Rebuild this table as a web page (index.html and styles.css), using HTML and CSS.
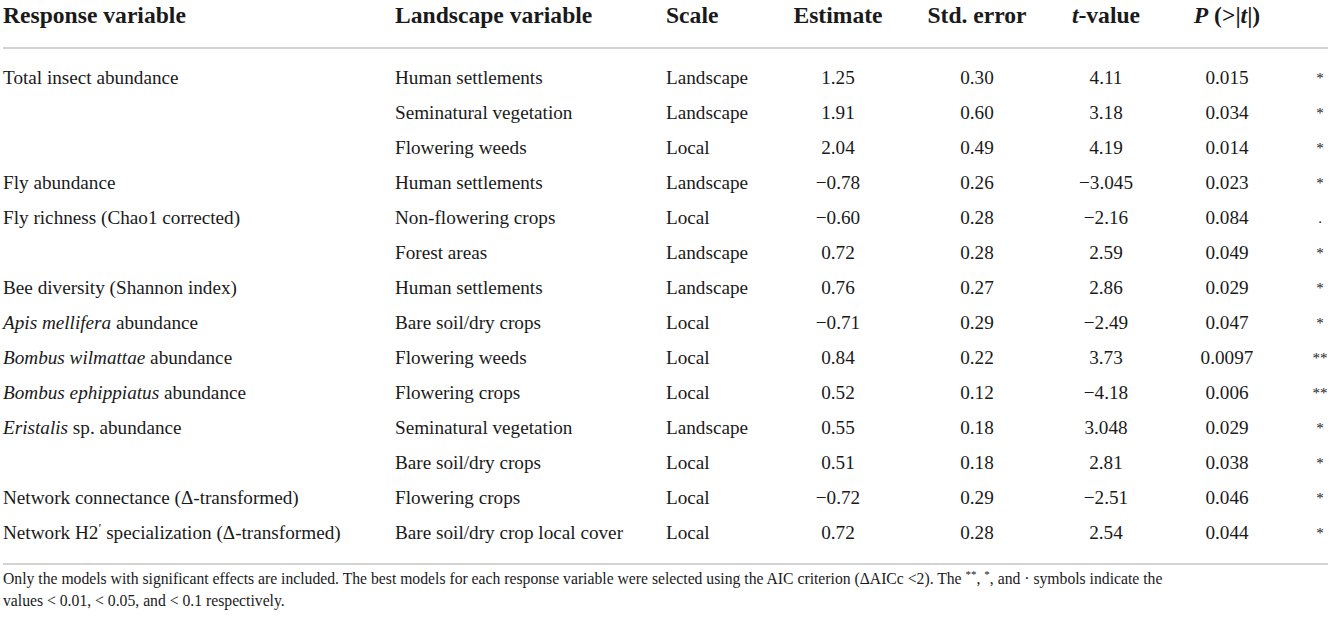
FILE: index.html
```html
<!DOCTYPE html>
<html lang="en">
<head>
<meta charset="utf-8">
<title>Table</title>
<link rel="stylesheet" href="styles.css">
</head>
<body>
<div class="wrap">
<table class="data">
  <colgroup>
    <col class="c-resp"><col class="c-land"><col class="c-scale"><col class="c-est"><col class="c-se"><col class="c-t"><col class="c-p"><col class="c-sig">
  </colgroup>
  <thead>
    <tr>
      <th class="l">Response variable</th>
      <th class="l">Landscape variable</th>
      <th class="l">Scale</th>
      <th>Estimate</th>
      <th>Std. error</th>
      <th><i>t</i>-value</th>
      <th><i>P</i> (&gt;|<i>t</i>|)</th>
      <th class="sig"></th>
    </tr>
  </thead>
  <tbody>
    <tr class="first"><td class="l">Total insect abundance</td><td class="l">Human settlements</td><td class="l">Landscape</td><td>1.25</td><td>0.30</td><td>4.11</td><td>0.015</td><td class="sig">*</td></tr>
    <tr><td class="l"></td><td class="l">Seminatural vegetation</td><td class="l">Landscape</td><td>1.91</td><td>0.60</td><td>3.18</td><td>0.034</td><td class="sig">*</td></tr>
    <tr><td class="l"></td><td class="l">Flowering weeds</td><td class="l">Local</td><td>2.04</td><td>0.49</td><td>4.19</td><td>0.014</td><td class="sig">*</td></tr>
    <tr><td class="l">Fly abundance</td><td class="l">Human settlements</td><td class="l">Landscape</td><td>−0.78</td><td>0.26</td><td>−3.045</td><td>0.023</td><td class="sig">*</td></tr>
    <tr><td class="l">Fly richness (Chao1 corrected)</td><td class="l">Non-flowering crops</td><td class="l">Local</td><td>−0.60</td><td>0.28</td><td>−2.16</td><td>0.084</td><td class="sig">.</td></tr>
    <tr><td class="l"></td><td class="l">Forest areas</td><td class="l">Landscape</td><td>0.72</td><td>0.28</td><td>2.59</td><td>0.049</td><td class="sig">*</td></tr>
    <tr><td class="l">Bee diversity (Shannon index)</td><td class="l">Human settlements</td><td class="l">Landscape</td><td>0.76</td><td>0.27</td><td>2.86</td><td>0.029</td><td class="sig">*</td></tr>
    <tr><td class="l"><i>Apis mellifera</i> abundance</td><td class="l">Bare soil/dry crops</td><td class="l">Local</td><td>−0.71</td><td>0.29</td><td>−2.49</td><td>0.047</td><td class="sig">*</td></tr>
    <tr><td class="l"><i>Bombus wilmattae</i> abundance</td><td class="l">Flowering weeds</td><td class="l">Local</td><td>0.84</td><td>0.22</td><td>3.73</td><td>0.0097</td><td class="sig">**</td></tr>
    <tr><td class="l"><i>Bombus ephippiatus</i> abundance</td><td class="l">Flowering crops</td><td class="l">Local</td><td>0.52</td><td>0.12</td><td>−4.18</td><td>0.006</td><td class="sig">**</td></tr>
    <tr><td class="l"><i>Eristalis</i> sp. abundance</td><td class="l">Seminatural vegetation</td><td class="l">Landscape</td><td>0.55</td><td>0.18</td><td>3.048</td><td>0.029</td><td class="sig">*</td></tr>
    <tr><td class="l"></td><td class="l">Bare soil/dry crops</td><td class="l">Local</td><td>0.51</td><td>0.18</td><td>2.81</td><td>0.038</td><td class="sig">*</td></tr>
    <tr><td class="l">Network connectance (Δ-transformed)</td><td class="l">Flowering crops</td><td class="l">Local</td><td>−0.72</td><td>0.29</td><td>−2.51</td><td>0.046</td><td class="sig">*</td></tr>
    <tr class="last"><td class="l">Network H2<sup class="prime">′</sup> specialization (Δ-transformed)</td><td class="l">Bare soil/dry crop local cover</td><td class="l">Local</td><td>0.72</td><td>0.28</td><td>2.54</td><td>0.044</td><td class="sig">*</td></tr>
  </tbody>
</table>
<p class="note">Only the models with significant effects are included. The best models for each response variable were selected using the AIC criterion (ΔAICc &lt;2). The <sup>**</sup>, <sup>*</sup>, and · symbols indicate the<br>values &lt; 0.01, &lt; 0.05, and &lt; 0.1 respectively.</p>
</div>
</body>
</html>
```

FILE: styles.css
```css
html, body {
  margin: 0;
  padding: 0;
  background: #ffffff;
}

body {
  font-family: "Liberation Serif", "Times New Roman", serif;
  color: #1a1a1a;
}

.wrap {
  padding: 0 3px;
}

.data {
  width: 1325px;
  border-collapse: collapse;
  table-layout: fixed;
  border-bottom: 2px solid #d3d3d3;
}

.c-resp { width: 392px; }
.c-land { width: 271px; }
.c-scale { width: 104px; }
.c-est { width: 136px; }
.c-se { width: 142px; }
.c-t { width: 116px; }
.c-p { width: 126px; }
.c-sig { width: 38px; }

.data th {
  font-size: 23.6px;
  font-weight: bold;
  line-height: 26px;
  padding: 2px 0 19px;
  text-align: center;
  border-bottom: 2px solid #d3d3d3;
  white-space: nowrap;
}

.data td {
  font-size: 19.2px;
  height: 35px;
  line-height: 22px;
  padding: 0;
  text-align: center;
  vertical-align: middle;
  white-space: nowrap;
}

.data .l {
  text-align: left;
}

.data td.sig,
.data th.sig {
  text-align: center;
  padding-left: 22px;
  font-size: 15px;
}

.data tr.first td {
  padding-top: 11px;
}

.data tr.last td {
  padding-bottom: 13px;
}

.prime {
  font-size: 0.7em;
  line-height: 0;
  vertical-align: 0.5em;
}

.note {
  margin: 0;
  padding-top: 3px;
  font-size: 15.7px;
  line-height: 22px;
  color: #1a1a1a;
}

.note sup {
  font-size: 0.7em;
  line-height: 0;
}
```
